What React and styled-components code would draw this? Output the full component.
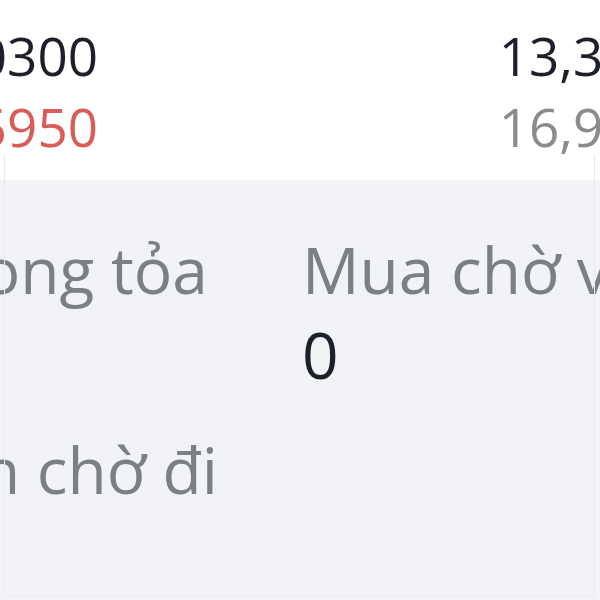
import React from 'react';
import styled, { createGlobalStyle } from 'styled-components';

const GlobalStyle = createGlobalStyle`
  html, body {
    margin: 0;
    padding: 0;
    background: #ffffff;
  }
  body {
    font-family: "Open Sans", "Noto Sans", sans-serif;
  }
`;

const Screen = styled.div`
  position: relative;
  width: 600px;
  height: 600px;
  overflow: hidden;
  background: #ffffff;

  &::after {
    content: '';
    position: absolute;
    left: 4px;
    right: 5px;
    top: 155px;
    bottom: 4px;
    border: 1px solid #e9eaee;
    border-top: none;
    pointer-events: none;
  }
`;

const Canvas = styled.div`
  width: 840px;
  margin-left: -120px;
`;

const QuoteSection = styled.div`
  height: 180px;
  box-sizing: border-box;
  padding: 20px 0 0;
  display: grid;
  grid-template-columns: 1fr auto;
`;

const QuoteColumn = styled.div`
  display: flex;
  flex-direction: column;
  align-items: ${p => (p.$end ? 'flex-end' : 'flex-start')};
  width: ${p => (p.$width ? `${p.$width}px` : 'auto')};
  padding-right: ${p => p.$padRight || 0}px;
`;

const Price = styled.div`
  font-size: 53px;
  line-height: 71px;
  white-space: nowrap;
  color: ${p => p.$color};
`;

const Panel = styled.div`
  height: 420px;
  box-sizing: border-box;
  background: #f2f3f6;
  padding: 47px 0 0 24px;
  display: grid;
  grid-template-columns: 398px 1fr;
  grid-auto-rows: min-content;
  row-gap: 30px;
`;

const Cell = styled.div`
  display: flex;
  flex-direction: column;
  white-space: nowrap;
`;

const Label = styled.div`
  font-size: 64px;
  line-height: 85px;
  color: #7c7f85;
`;

const Value = styled.div`
  font-size: 64px;
  line-height: 85px;
  color: #1d1f2b;
`;

const stats = [
  { label: 'Phong tỏa', value: '0' },
  { label: 'Mua chờ về', value: '0' },
  { label: 'Bán chờ đi', value: '0' },
];

export default function App() {
  return (
    <>
      <GlobalStyle />
      <Screen>
        <Canvas>
          <QuoteSection>
            <QuoteColumn $end $width={218}>
              <Price $color="#1d1f2b">10300</Price>
              <Price $color="#d85d58">15950</Price>
            </QuoteColumn>
            <QuoteColumn $padRight={56}>
              <Price $color="#1d1f2b">13,300</Price>
              <Price $color="#8b8b8d">16,950</Price>
            </QuoteColumn>
          </QuoteSection>
          <Panel>
            {stats.map(s => (
              <Cell key={s.label}>
                <Label>{s.label}</Label>
                <Value>{s.value}</Value>
              </Cell>
            ))}
          </Panel>
        </Canvas>
      </Screen>
    </>
  );
}
